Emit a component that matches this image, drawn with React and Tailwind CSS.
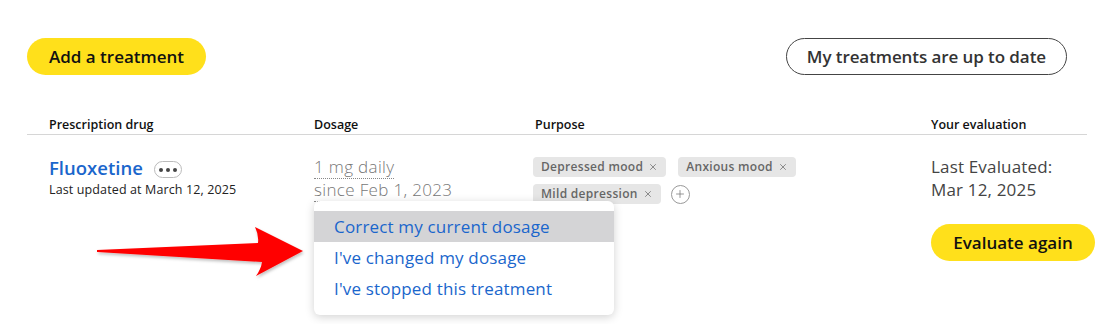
import { X, Plus } from 'lucide-react'

const font = { fontFamily: '"Open Sans", "Liberation Sans", sans-serif' }

function Tag({ label }) {
  return (
    <span className="inline-flex items-center h-[20px] px-[8px] rounded-[4px] bg-[#e6e6e6] text-[12px] tracking-[0.025em] font-semibold text-[#666] leading-none">
      {label}
      <X className="ml-[5px] w-[10px] h-[10px] text-[#777]" strokeWidth={2} />
    </span>
  )
}

function Arrow() {
  return (
    <svg className="absolute left-[90px] top-[220px]" width="225" height="64" viewBox="90 220 225 64">
      <defs>
        <filter id="sh" x="-10%" y="-30%" width="120%" height="160%">
          <feDropShadow dx="1" dy="2" stdDeviation="1.5" floodColor="#000" floodOpacity="0.25" />
        </filter>
      </defs>
      <path
        d="M97 250 L258 243 Q259 235 255 227 L303 251 L256 276 Q261 269 262 262 L97 252 Z"
        fill="#ff0000"
        filter="url(#sh)"
      />
    </svg>
  )
}

export default function App() {
  return (
    <div className="relative w-[1119px] h-[324px] bg-white overflow-hidden" style={font}>
      <div className="pl-[27px] pt-[38px] w-[1087px]">
        <div className="flex items-center">
          <button className="h-[37px] px-[22px] rounded-full bg-[#ffe01b] text-[17px] font-semibold text-[#111]">
            Add a treatment
          </button>
          <button className="ml-auto mr-[20px] h-[37px] px-[20px] rounded-full border border-[#444] text-[17px] tracking-[-0.005em] font-semibold text-[#333]">
            My treatments are up to date
          </button>
        </div>

        <div className="mt-[42px] grid grid-cols-[265px_221px_396px_1fr] pl-[22px] leading-[16px] pb-[1px] border-b border-[#d6d6d6] text-[12.5px] font-semibold text-[#111]">
          <div>Prescription drug</div>
          <div>Dosage</div>
          <div>Purpose</div>
          <div>Your evaluation</div>
        </div>

        <div className="grid grid-cols-[265px_221px_396px_1fr] items-start pl-[22px] pt-[21px]">
          <div>
            <div className="flex items-center gap-[11px]">
              <span className="text-[18.5px] font-semibold text-[#1a66cc] leading-[24px]">Fluoxetine</span>
              <span className="flex items-center justify-center gap-[3px] w-[28px] h-[17px] rounded-full border border-[#bbb] mt-[3px]">
                <span className="w-[4px] h-[4px] rounded-full bg-[#444]" />
                <span className="w-[4px] h-[4px] rounded-full bg-[#444]" />
                <span className="w-[4px] h-[4px] rounded-full bg-[#444]" />
              </span>
            </div>
            <div className="text-[12.5px] tracking-[0.01em] text-[#222] mt-[1px]">Last updated at March 12, 2025</div>
          </div>

          <div className="text-[17px] tracking-[0.02em] font-light text-[#777] leading-[23px] mt-[-1px]">
            <div><span className="border-b border-dotted border-[#888]">1 mg daily</span></div>
            <div><span className="border-b border-dotted border-[#888]">since Feb 1, 2023</span></div>
          </div>

          <div className="flex flex-wrap content-start gap-x-[12px] gap-y-[7px] w-[290px] ml-[-2px] mt-[1px] items-center">
            <Tag label="Depressed mood" />
            <Tag label="Anxious mood" />
            <Tag label="Mild depression" />
            <span className="flex items-center justify-center w-[19px] h-[19px] rounded-full border border-[#999] ml-[-2px]">
              <Plus className="w-[12px] h-[12px] text-[#777]" strokeWidth={1.5} />
            </span>
          </div>

          <div>
            <div className="text-[17px] tracking-[0.01em] text-[#444] leading-[23px] mt-[-1px]">
              Last Evaluated:
              <br />
              Mar 12, 2025
            </div>
            <button className="mt-[23px] h-[37px] w-[164px] rounded-full bg-[#ffe01b] text-[17px] font-semibold text-[#111]">
              Evaluate again
            </button>
          </div>
        </div>
      </div>

      <div className="absolute left-[314px] top-[201px] w-[300px] h-[114px] bg-white rounded-[6px] shadow-[0_2px_10px_rgba(0,0,0,0.18)] pt-[10px]">
        <div className="h-[31px] flex items-center px-[20px] bg-[#d4d4d6] text-[17px] tracking-[0.01em] text-[#1a66cc]">Correct my current dosage</div>
        <div className="h-[31px] flex items-center px-[20px] text-[17px] tracking-[0.01em] text-[#1a66cc]">I've changed my dosage</div>
        <div className="h-[31px] flex items-center px-[20px] text-[17px] tracking-[0.01em] text-[#1a66cc]">I've stopped this treatment</div>
      </div>

      <Arrow />
    </div>
  )
}
